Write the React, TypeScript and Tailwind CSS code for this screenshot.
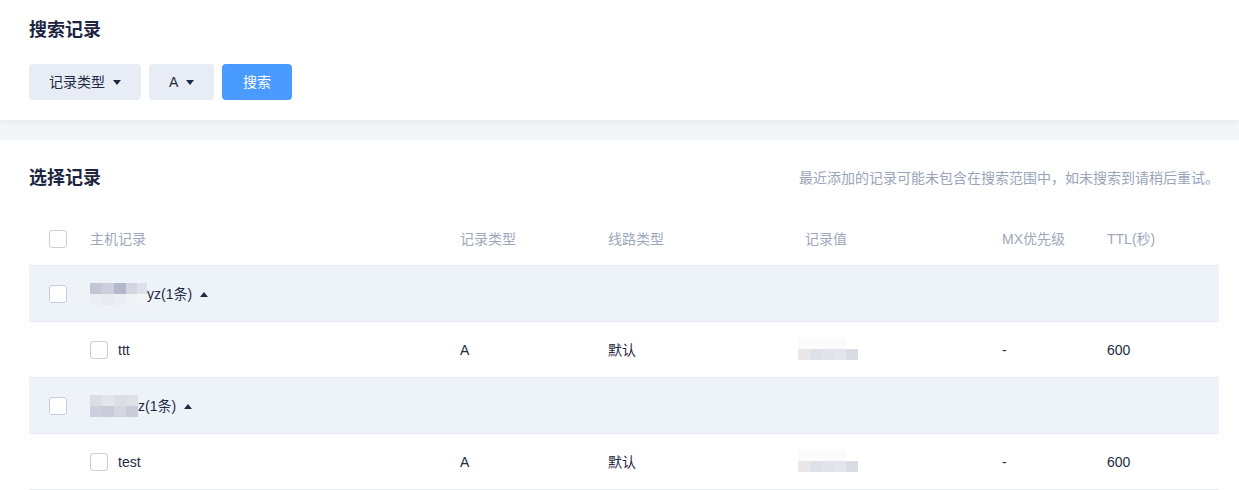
import React from "react";

const font = {
  fontFamily: '"Liberation Sans", "Noto Sans CJK SC", sans-serif',
};

function Checkbox(): JSX.Element {
  return <span className="block h-[18px] w-[18px] shrink-0 rounded-[3px] border border-[#c8cedb] bg-white" />;
}

function Caret(): JSX.Element {
  return (
    <svg width="8" height="5" viewBox="0 0 8 5" className="shrink-0">
      <path d="M0 0h8L4 5z" fill="#1f2a44" />
    </svg>
  );
}

function CaretUp(): JSX.Element {
  return (
    <svg width="8" height="5" viewBox="0 0 8 5" className="shrink-0">
      <path d="M0 5h8L4 0z" fill="#1f2a44" />
    </svg>
  );
}

// pixelated placeholder for masked domain / value
function Mosaic({ rows, widths }: { rows: string[][]; widths: number[] }): JSX.Element {
  return (
    <div className="flex flex-col">
      {rows.map((row, i) => (
        <div key={i} className="flex">
          {row.map((c, j) => (
            <span key={j} className="block h-[11px]" style={{ background: c, width: widths[j] }} />
          ))}
        </div>
      ))}
    </div>
  );
}

const cols = "grid grid-cols-[61px_370px_148px_197px_197px_105px_1fr] items-center";

type Group = { mosaic: string[][]; widths: number[]; suffix: string; host: string };

const groups: Group[] = [
  {
    mosaic: [
      ["#c3c6d4", "#cdd0dc", "#b4b8ca", "#d3d6e0", "#dfe1e9"],
      ["#eceef3", "#e9ebf1", "#eceef3", "#f0f2f6", "#f3f4f8"],
    ],
    widths: [12, 12, 12, 11, 10],
    suffix: "yz(1条)",
    host: "ttt",
  },
  {
    mosaic: [
      ["#dcdee7", "#e3e5ec", "#dcdee7", "#dfe1e9"],
      ["#cdd0dc", "#c9ccd8", "#d4d6e0", "#c9ccd8"],
    ],
    widths: [12, 12, 12, 12],
    suffix: "z(1条)",
    host: "test",
  },
];

const valueMosaic = [
  ["#fbfbfb", "#fbfcfb", "#fafbfb", "#fbfbfb", "#ffffff"],
  ["#ebe7e9", "#dfe1e6", "#e1e3e8", "#e4e5ea", "#dadce3"],
];

export default function App(): JSX.Element {
  return (
    <div className="min-h-[490px] w-full bg-[#f3f6f9] text-[14px]" style={font}>
      <div className="relative z-10 bg-white px-[29px] pt-[18px] pb-[20px] shadow-[0_2px_6px_rgba(30,40,70,0.07)]">
        <h2 className="text-[18px] font-bold leading-[24px] text-[#1d2541]">搜索记录</h2>
        <div className="mt-[22px] flex gap-[8px]">
          <button className="flex h-[36px] w-[112px] items-center gap-[8px] rounded-[4px] bg-[#e8ecf5] pl-[20px] text-[#1f2a44]">
            记录类型
            <Caret />
          </button>
          <button className="flex h-[36px] w-[65px] items-center gap-[8px] rounded-[4px] bg-[#e8ecf5] pl-[20px] text-[#1f2a44]">
            A
            <Caret />
          </button>
          <button className="h-[36px] w-[70px] rounded-[4px] bg-[#4a9bff] text-white">搜索</button>
        </div>
      </div>

      <div className="mt-[20px] bg-white pl-[29px] pr-[20px] pt-[26px]">
        <div className="flex items-center justify-between">
          <h2 className="text-[18px] font-bold leading-[24px] text-[#1d2541]">选择记录</h2>
          <p className="text-[14px] text-[#9aa5b9]">最近添加的记录可能未包含在搜索范围中，如未搜索到请稍后重试。</p>
        </div>

        <div className="mt-[23px]">
          <div className={`${cols} h-[53px] border-b border-[#e6e9ef] text-[#9ea8ba]`}>
            <div className="pl-[20px]">
              <Checkbox />
            </div>
            <div>主机记录</div>
            <div>记录类型</div>
            <div>线路类型</div>
            <div>记录值</div>
            <div>MX优先级</div>
            <div>TTL(秒)</div>
          </div>

          {groups.map((g) => (
            <React.Fragment key={g.host}>
              <div className="flex h-[56px] items-center border-b border-[#e6e9ef] bg-[#eef3fa] pl-[20px] text-[#1f2a44]">
                <Checkbox />
                <div className="ml-[23px] flex items-center pt-[1px]">
                  <Mosaic rows={g.mosaic} widths={g.widths} />
                  <span>{g.suffix}</span>
                  <span className="ml-[8px]">
                    <CaretUp />
                  </span>
                </div>
              </div>
              <div className={`${cols} h-[56px] border-b border-[#e6e9ef] pt-[1px] text-[#1f2a44]`}>
                <div />
                <div className="flex items-center gap-[10px]">
                  <Checkbox />
                  <span>{g.host}</span>
                </div>
                <div>A</div>
                <div>默认</div>
                <div className="-ml-[7px] -mt-[2px]">
                  <Mosaic rows={valueMosaic} widths={[12, 12, 12, 12, 12]} />
                </div>
                <div>-</div>
                <div>600</div>
              </div>
            </React.Fragment>
          ))}
        </div>
      </div>
    </div>
  );
}
